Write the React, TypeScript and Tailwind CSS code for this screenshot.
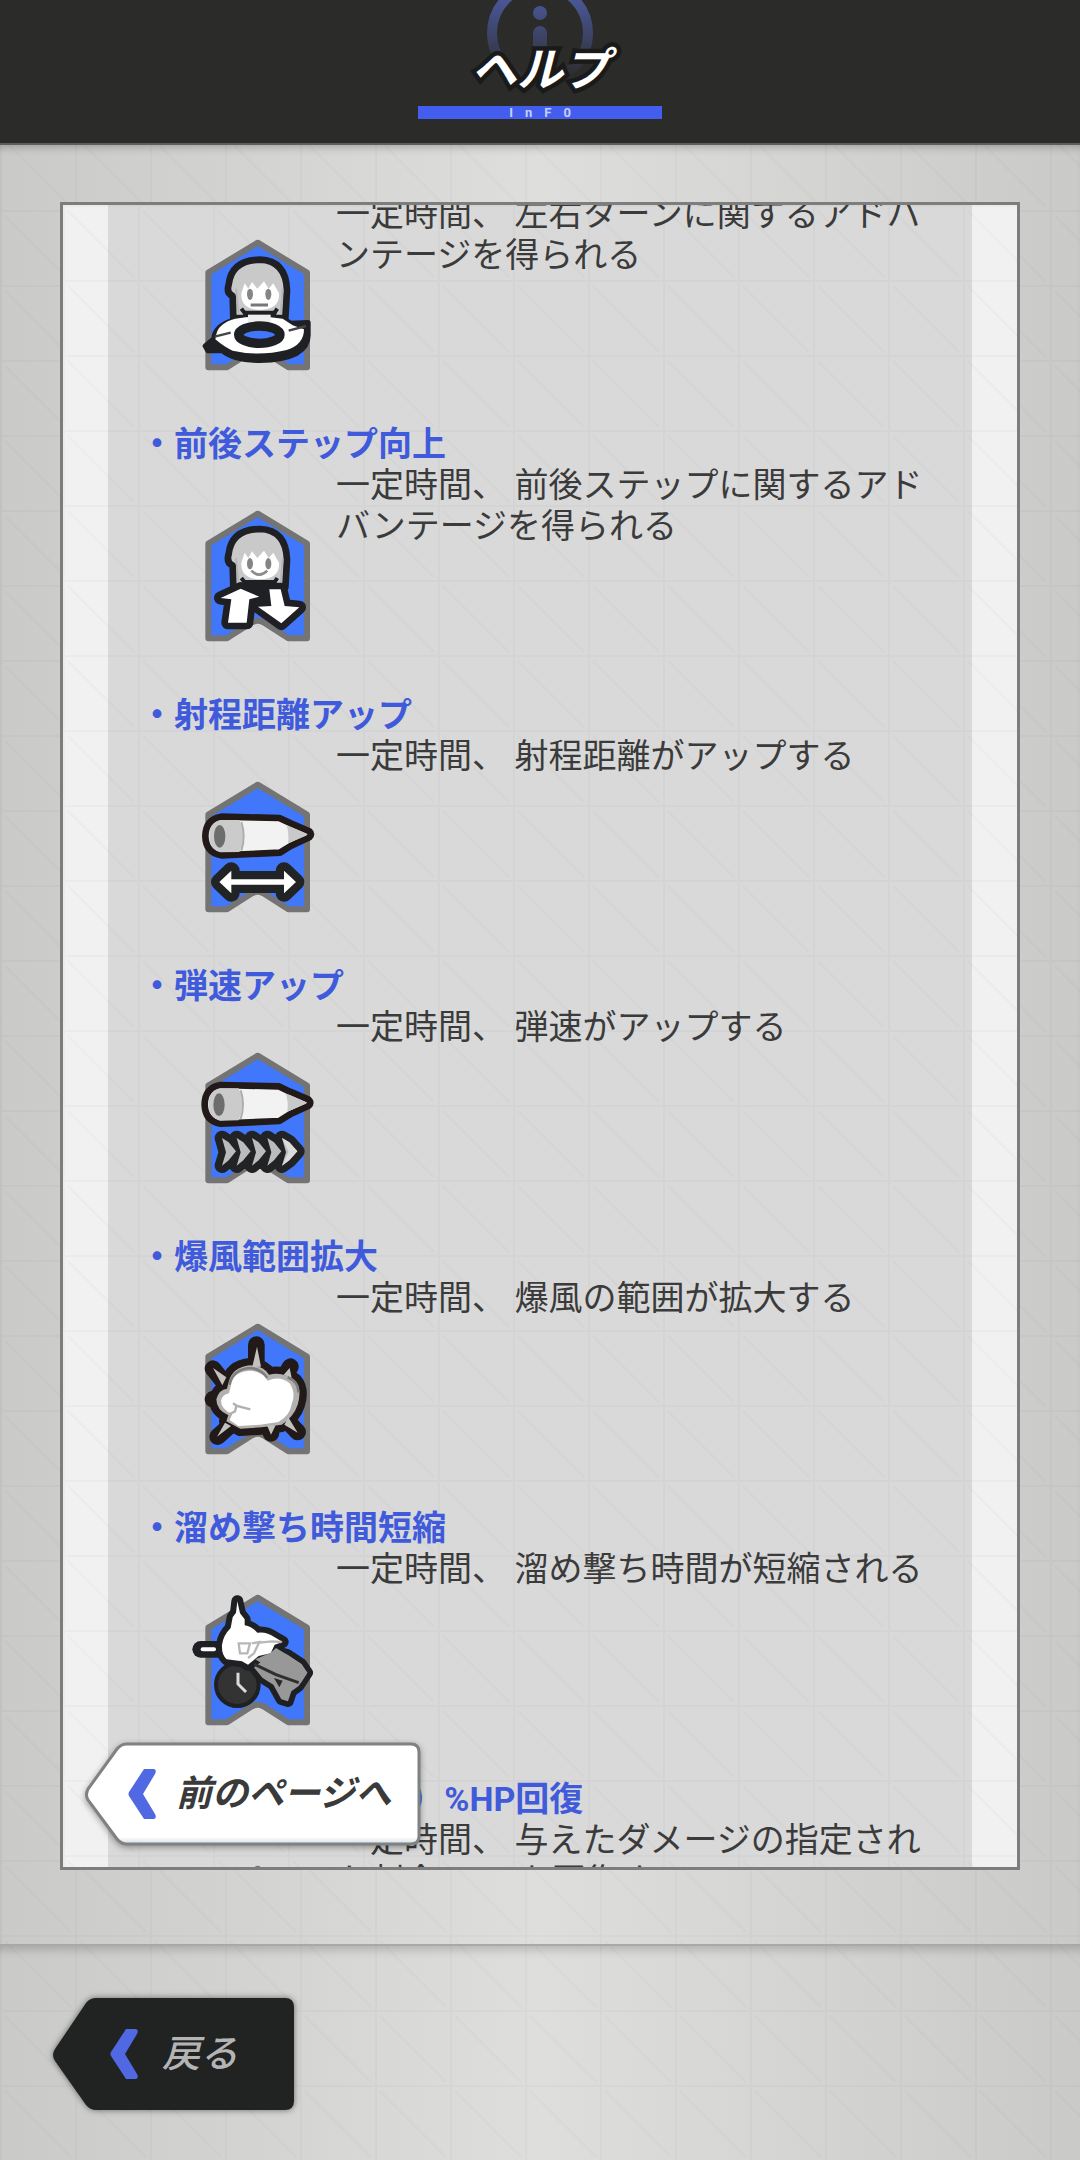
import { useId, useLayoutEffect, useRef } from "react";
import type { ReactNode } from "react";

type HelpItem = {
  title: string;
  text: string;
  icon: ReactNode;
};

/* Square tiles with a diagonal, used behind the page and the panel */
function GridTexture({ top = 0 }: { top?: number }) {
  const id = useId();
  return (
    <svg aria-hidden="true" className="pointer-events-none absolute inset-0 h-full w-full">
      <defs>
        <pattern id={id} x="0" y={top} width="75" height="75" patternUnits="userSpaceOnUse">
          <path d="M1 0V75M0 1H75" stroke="#000" strokeOpacity="0.022" strokeWidth="2" />
          <path d="M5 6L71 72" stroke="#000" strokeOpacity="0.02" strokeWidth="2" />
        </pattern>
      </defs>
      <rect width="100%" height="100%" fill={`url(#${id})`} />
    </svg>
  );
}

function Badge({ children }: { children?: ReactNode }) {
  return (
    <svg viewBox="24 42 396 414" aria-hidden="true" className="mt-[42px] h-[138px] w-[132px] shrink-0">
      <path
        d="M233 62L381 152V436H325L250 388Q233 378 216 388L141 436H85V152Z"
        fill="#4177fa"
        stroke="#747474"
        strokeWidth="18"
        strokeLinejoin="round"
      />
      {children}
    </svg>
  );
}

function Face({ smile = false }: { smile?: boolean }) {
  return (
    <g>
      <path
        d="M160 288L158 222Q138 215 146 188Q154 114 240 113Q318 116 321 205L316 288Z"
        fill="#c9c9c9"
        stroke="#1f2023"
        strokeWidth="20"
        strokeLinejoin="round"
      />
      <path d="M188 266H290L286 300H194Z" fill="#1f2023" />
      <path
        d="M184 214L194 184L205 200L216 180L232 200L252 178L266 200L280 184L297 214Q300 262 240 264Q181 262 184 214Z"
        fill="#fff"
      />
      <path d="M168 200L176 275M308 200L302 275" stroke="#b5b5b5" strokeWidth="5" />
      <ellipse cx="210" cy="217" rx="9" ry="17" fill="#858585" />
      <ellipse cx="265" cy="217" rx="9" ry="17" fill="#858585" />
      {smile ? (
        <path d="M214 238Q238 262 262 238" fill="none" stroke="#8c8c8c" strokeWidth="8" />
      ) : (
        <path d="M212 249H264" stroke="#777" strokeWidth="9" />
      )}
      <path d="M184 260L202 284M292 260L276 284" stroke="#1f2023" strokeWidth="12" />
    </g>
  );
}

function Shell() {
  return (
    <g>
      <path
        d="M122 154L296 158L330 174L386 198Q396 207 386 216L330 242L298 262L122 270Q75 262 74 212Q75 162 122 154Z"
        fill="#f2f2f2"
        stroke="#211a19"
        strokeWidth="20"
        strokeLinejoin="round"
      />
      <path d="M330 184L376 204Q382 207 376 211L322 234Q326 208 318 180Z" fill="#c9c9c9" />
      <path d="M120 164H176Q198 212 176 260L120 261Q86 252 86 212Q86 172 120 164Z" fill="#cbcbcb" />
      <path d="M182 170Q196 212 182 256" fill="none" stroke="#adadad" strokeWidth="6" />
      <ellipse cx="117" cy="213" rx="17" ry="34" fill="#6d6d6d" />
    </g>
  );
}

function TurnIcon() {
  return (
    <Badge>
      <Face />
      <path
        d="M76 372L102 350Q104 312 162 294Q205 282 236 282Q300 282 332 304L384 302V336Q386 372 350 394Q310 414 240 415Q160 414 128 386H84Z"
        fill="#1f2023"
        stroke="#1f2023"
        strokeWidth="16"
        strokeLinejoin="round"
      />
      <path
        d="M108 342Q112 304 166 290Q236 278 308 290L338 310L372 322Q372 368 320 384Q236 404 158 386Q134 376 106 352Z"
        fill="#fff"
      />
      <path d="M204 278H272V300H204Z" fill="#eee" />
      <path d="M104 344L152 332M326 326L378 312" stroke="#444" strokeWidth="7" />
      <ellipse cx="238" cy="338" rx="62" ry="26" fill="#4177fa" stroke="#1f2023" strokeWidth="28" />
    </Badge>
  );
}

function StepIcon() {
  return (
    <Badge>
      <g transform="translate(0 -5)">
        <Face smile />
        <g stroke="#1f2023" fill="#fff" strokeWidth="40" strokeLinejoin="round">
          <path d="M182 292L238 316L208 324L200 394H144L154 324L122 320Z" paintOrder="stroke" />
          <path d="M268 294H302L314 344L358 348L304 396L234 346L274 344Z" paintOrder="stroke" />
        </g>
      </g>
    </Badge>
  );
}

function RangeIcon() {
  return (
    <Badge>
      <g transform="translate(2 4)">
        <Shell />
        <path
          d="M116 350L152 316V342H310V316L346 350L310 384V358H152V384Z"
          fill="#fff"
          stroke="#222324"
          strokeWidth="50"
          strokeLinejoin="round"
          paintOrder="stroke"
        />
      </g>
    </Badge>
  );
}

function SpeedIcon() {
  return (
    <Badge>
      <g transform="translate(0 4)">
        <g transform="translate(0 -8)">
          <Shell />
        </g>
        <path
          d="M126 305L146 318L168 345L146 372L126 388L138 348ZM170 305L190 318L212 345L190 372L170 388L182 348ZM216 305L236 318L258 345L236 372L216 388L228 348ZM262 305L282 318L304 345L282 372L262 388L274 348ZM306 305L328 318L352 345L328 372L306 388L318 348Z"
          fill="#bcbcbc"
          stroke="#222324"
          strokeWidth="44"
          strokeLinejoin="round"
          paintOrder="stroke"
        />
        <path d="M306 305L328 318L352 345L328 372L306 388L326 346Z" fill="#dcdcdc" />
      </g>
    </Badge>
  );
}

function BlastIcon() {
  return (
    <Badge>
      <g transform="translate(5 10)">
        {/* spikes with their dark rim */}
        <path
          d="M224 106V170M94 178L134 228M326 172L310 200M108 382L148 346M348 368L312 330M268 372V350M94 270L120 266"
          stroke="#211a19"
          strokeWidth="50"
          strokeLinecap="round"
        />
        <path
          d="M140 222Q150 174 204 168Q244 168 262 196Q306 186 340 214Q362 240 348 286Q336 322 300 346L240 354L176 358L134 336L140 318Q104 302 104 270Q112 240 136 238Z"
          fill="#b3b1b0"
          stroke="#211a19"
          strokeWidth="44"
          strokeLinejoin="round"
          paintOrder="stroke"
        />
        <path d="M226 112L238 172H212ZM94 176L134 204L122 228ZM324 176L330 206L306 196ZM106 382L130 340L148 350ZM348 370L308 346L320 324ZM268 376L256 348H282Z" fill="#c4c2c1" />
        <path d="M144 226Q154 180 204 176Q238 178 256 206M350 250Q352 218 318 204" fill="none" stroke="#807e7d" strokeWidth="8" />
        <path
          d="M148 228Q154 186 204 184Q242 186 258 214Q296 198 324 222Q344 252 330 284Q326 318 290 338L236 346L170 350L144 332L152 314Q118 300 118 274Q122 256 142 252Z"
          fill="#fff"
        />
        <path d="M154 282L166 290L206 300M164 290L160 306L144 314" fill="none" stroke="#b0b0b0" strokeWidth="7" />
      </g>
    </Badge>
  );
}

function ChargeIcon() {
  return (
    <Badge>
      <g transform="translate(0 -3)">
        <circle cx="172" cy="326" r="64" fill="#333334" stroke="#1f2023" strokeWidth="12" />
        <path d="M174 290V324L198 348" fill="none" stroke="#dcdcdc" strokeWidth="9" />
        <path
          d="M230 256L270 222L322 236L364 264L382 290L356 330L334 346L324 376L304 370L280 326L248 306L220 272Z"
          fill="#989898"
          stroke="#1f2023"
          strokeWidth="34"
          strokeLinejoin="round"
          paintOrder="stroke"
        />
        <path d="M62 220H110" stroke="#1f2023" strokeWidth="50" strokeLinecap="round" />
        <path
          d="M172 76L180 112L194 130L194 148Q216 152 232 170Q260 166 284 184L308 198L284 206L272 232L236 240L204 266L186 256L140 250Q124 236 126 206Q130 178 152 156L158 124L168 110Z"
          fill="#fff"
          stroke="#1f2023"
          strokeWidth="36"
          strokeLinejoin="round"
          paintOrder="stroke"
        />
        <path d="M68 220H102" stroke="#fff" strokeWidth="12" strokeLinecap="round" />
        <path d="M226 250L272 230L288 216L322 236L364 264L382 290L362 322L290 292Z" fill="#989898" />
        <path d="M222 264L288 296L356 320" fill="none" stroke="#2f2f2f" strokeWidth="9" />
        <path d="M282 306L308 314L298 334Z" fill="#2a2a2a" />
        <path d="M176 202H210L202 232H180ZM216 202L238 198L222 232L204 246M238 200L276 196L304 198" fill="none" stroke="#b8b8b8" strokeWidth="7" />
      </g>
    </Badge>
  );
}

const items: HelpItem[] = [
  { title: "左右ターン向上", text: "一定時間、 左右ターンに関するアドバンテージを得られる", icon: <TurnIcon /> },
  { title: "前後ステップ向上", text: "一定時間、 前後ステップに関するアドバンテージを得られる", icon: <StepIcon /> },
  { title: "射程距離アップ", text: "一定時間、 射程距離がアップする", icon: <RangeIcon /> },
  { title: "弾速アップ", text: "一定時間、 弾速がアップする", icon: <SpeedIcon /> },
  { title: "爆風範囲拡大", text: "一定時間、 爆風の範囲が拡大する", icon: <BlastIcon /> },
  { title: "溜め撃ち時間短縮", text: "一定時間、 溜め撃ち時間が短縮される", icon: <ChargeIcon /> },
  { title: "ダメージ（指定）%HP回復", text: "一定時間、 与えたダメージの指定された割合でHPを回復する", icon: <Badge /> },
];

function Chevron() {
  return (
    <svg viewBox="0 0 28 52" aria-hidden="true" className="relative h-[52px] w-[28px] shrink-0">
      <path d="M16 1H26Q29 2 27 6L15 26L27 46Q29 50 26 51H16L1 28Q0 26 1 24Z" fill="#5069e3" />
    </svg>
  );
}

export default function App() {
  const scroller = useRef<HTMLDivElement>(null);

  // open the list just past the first heading
  useLayoutEffect(() => {
    if (scroller.current) scroller.current.scrollTop = 52;
  }, []);

  return (
    <div className="relative flex h-screen flex-col overflow-hidden bg-linear-to-r from-[#cacac8] via-[#dedfdd] to-[#cacac8] font-[Roboto,'Noto_Sans_CJK_JP',sans-serif]">
      <GridTexture top={60} />

      {/* Header */}
      <header className="relative flex h-[145px] shrink-0 flex-col items-center overflow-hidden border-b-2 border-[#5e5e5c] bg-[#2b2b29]">
        <svg viewBox="0 0 106 86" aria-hidden="true" className="absolute top-0 h-[86px] w-[106px]">
          <defs>
            <linearGradient id="info-fade" x1="0" y1="0" x2="0" y2="80" gradientUnits="userSpaceOnUse">
              <stop offset="0" stopColor="#4a5796" />
              <stop offset="1" stopColor="#2b2b29" />
            </linearGradient>
          </defs>
          <circle cx="53" cy="33" r="48" fill="none" stroke="url(#info-fade)" strokeWidth="10" />
          <circle cx="53" cy="13" r="7" fill="url(#info-fade)" />
          <rect x="46" y="26" width="14" height="40" rx="7" fill="url(#info-fade)" />
        </svg>
        <h1 className="relative mt-[42px] text-[46px] leading-[56px] font-bold text-white italic [paint-order:stroke_fill] [-webkit-text-stroke:9px_#1a1a1a]">
          ヘルプ
        </h1>
        <p className="mt-2 flex h-[13px] w-[244px] items-center justify-center gap-3 bg-[#435eee] text-[13px] leading-[13px] font-bold text-[#c6cffc]">
          <span>I</span>
          <span>n</span>
          <span>F</span>
          <span>0</span>
        </p>
      </header>

      {/* Help panel */}
      <main className="relative flex min-h-0 flex-1 flex-col px-[60px] pt-[57px] pb-[74px] shadow-[inset_0_8px_8px_-6px_rgba(0,0,0,0.25)]">
        <section className="relative flex min-h-0 flex-1 flex-col border-3 border-[#7d7d7d] bg-[#f1f1f1] px-[45px]">
          <div className="min-h-0 flex-1 bg-[#d9d9d9]">
            <GridTexture />
            <div ref={scroller} className="relative h-full overflow-y-auto px-8 [scrollbar-width:none]">
              {items.map((item) => (
                <article key={item.title} className="pb-[50px] text-[34px] leading-[41px]">
                  <h2 className="font-bold whitespace-nowrap text-[#3f5bdb]">・{item.title}</h2>
                  <div className="flex gap-4 pl-[48px]">
                    {item.icon}
                    <p className="flex-1 text-[#3b3b3b]">{item.text}</p>
                  </div>
                </article>
              ))}
            </div>
          </div>

          {/* Previous page button */}
          <button type="button" className="absolute bottom-[21px] left-[22px] flex h-[104px] w-[336px] items-center gap-5 pl-[43px]">
            <svg viewBox="0 0 336 104" aria-hidden="true" className="absolute inset-0 h-full w-full overflow-visible drop-shadow-[0_2px_3px_rgba(0,0,0,0.35)]">
              <defs>
                <linearGradient id="prev-fill" x1="0" y1="0" x2="0" y2="1">
                  <stop offset="0.93" stopColor="#fff" />
                  <stop offset="1" stopColor="#d3dfe8" />
                </linearGradient>
              </defs>
              <path
                d="M42 2H326Q334 2 334 10V94Q334 102 326 102H42Q36 102 32 97L3 58Q0 53 3 47L32 7Q36 2 42 2Z"
                fill="url(#prev-fill)"
                stroke="#7f8182"
                strokeWidth="3"
              />
            </svg>
            <Chevron />
            <span className="relative text-[36px] leading-[44px] font-bold whitespace-nowrap text-[#3a3a3a] italic">前のページへ</span>
          </button>
        </section>
      </main>

      {/* Footer */}
      <footer className="relative h-[216px] shrink-0 border-t-2 border-[#a9a9a7] px-[52px] pt-[51px] shadow-[inset_0_12px_10px_-8px_rgba(0,0,0,0.18)]">
        <button type="button" className="relative flex h-[114px] w-[244px] items-center gap-6 pl-[58px]">
          <svg viewBox="0 0 244 114" aria-hidden="true" className="absolute inset-0 h-full w-full overflow-visible drop-shadow-[0_0_3px_rgba(0,0,0,0.5)]">
            <path d="M44 1H233Q242 1 242 10V104Q242 113 233 113H44Q38 113 34 108L3 64Q-1 58 3 52L34 6Q38 1 44 1Z" fill="#212222" />
          </svg>
          <Chevron />
          <span className="relative text-[38px] leading-[44px] font-medium whitespace-nowrap text-[#b4b4b4] italic">戻る</span>
        </button>
      </footer>
    </div>
  );
}
